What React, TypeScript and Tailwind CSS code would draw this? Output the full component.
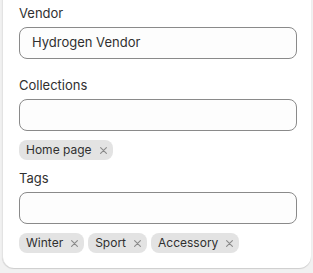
import React from 'react';

const XIcon = () => (
  <svg width="7" height="7" viewBox="0 0 7 7" className="text-[#8a8a8a]">
    <path d="M0.6 0.6L6.4 6.4M6.4 0.6L0.6 6.4" stroke="currentColor" strokeWidth="1.1" strokeLinecap="round" />
  </svg>
);

const Chip: React.FC<{ label: string }> = ({ label }) => (
  <span className="inline-flex items-center h-5 pl-[7px] pr-[6px] gap-2 rounded-lg bg-[#e3e3e3] text-xs text-[#303030]">
    {label}
    <XIcon />
  </span>
);

const Field: React.FC<{ label: string; value?: string; chips?: string[] }> = ({ label, value, chips }) => (
  <div>
    <label className="block text-[13px] leading-5 text-[#303030] mb-1">{label}</label>
    <div className="h-8 rounded-lg border border-[#8a8a8a] bg-[#fdfdfd] px-3 flex items-center text-[13px] text-[#303030]">
      {value}
    </div>
    {chips && (
      <div className="flex gap-1 mt-[9px]">
        {chips.map((c) => (
          <Chip key={c} label={c} />
        ))}
      </div>
    )}
  </div>
);

export default function App() {
  return (
    <div className="h-[273px] bg-[#f1f1f1] pl-[2px] pr-[2px] overflow-hidden" style={{ fontFamily: 'Inter, "Liberation Sans", sans-serif' }}>
      <div className="-mt-3 bg-white rounded-b-xl border-l border-[#e3e3e3] shadow-[0_1px_1px_rgba(0,0,0,0.15)] pt-[15px] pb-[15px] pl-4 pr-[14px]">
        <Field label="Vendor" value="Hydrogen Vendor" />
        <div className="mt-4">
          <Field label="Collections" chips={['Home page']} />
        </div>
        <div className="mt-2">
          <Field label="Tags" chips={['Winter', 'Sport', 'Accessory']} />
        </div>
      </div>
    </div>
  );
}
